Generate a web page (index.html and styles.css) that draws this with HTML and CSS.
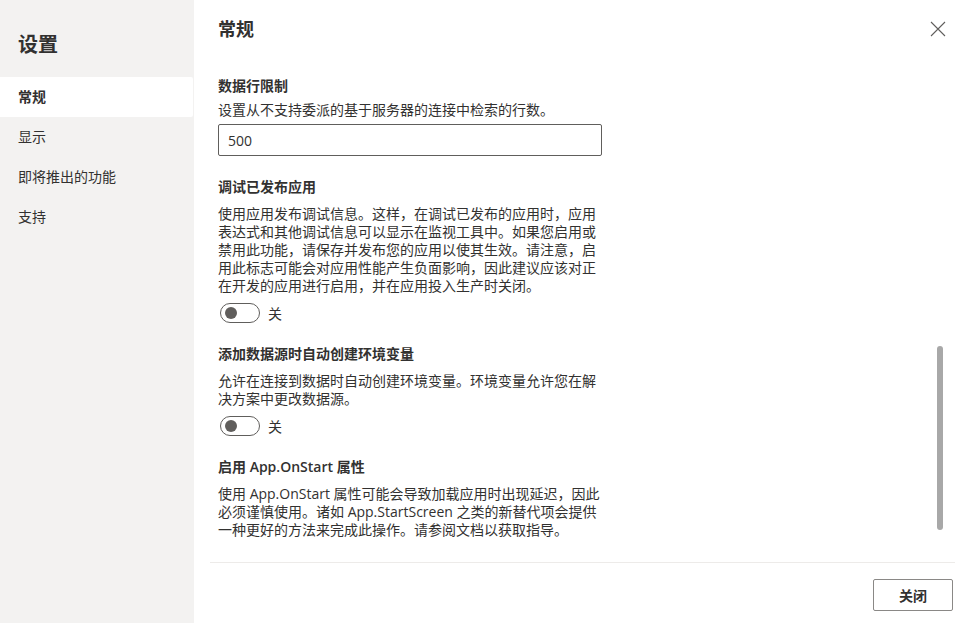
FILE: index.html
```html
<!DOCTYPE html>
<html lang="zh-CN">
<head>
<meta charset="utf-8">
<title>设置</title>
<link rel="stylesheet" href="styles.css">
</head>
<body>
<div class="dialog">
  <aside class="sidebar">
    <h1 class="sidebar-title">设置</h1>
    <nav class="nav">
      <a class="nav-item is-active">常规</a>
      <a class="nav-item">显示</a>
      <a class="nav-item">即将推出的功能</a>
      <a class="nav-item">支持</a>
    </nav>
  </aside>

  <main class="panel">
    <div class="panel-body">
      <header class="panel-header">
        <h2 class="panel-title">常规</h2>
        <button class="close-btn" aria-label="关闭">
          <svg width="16" height="16" viewBox="0 0 16 16" aria-hidden="true">
            <path d="M1 1 L15 15 M15 1 L1 15" stroke="#605e5c" stroke-width="1.1" fill="none"/>
          </svg>
        </button>
      </header>

      <section class="setting setting-first">
        <div class="setting-label">数据行限制</div>
        <p class="setting-desc tight">设置从不支持委派的基于服务器的连接中检索的行数。</p>
        <input class="text-input" type="text" value="500">
      </section>

      <section class="setting">
        <div class="setting-label">调试已发布应用</div>
        <p class="setting-desc">使用应用发布调试信息。这样，在调试已发布的应用时，应用表达式和其他调试信息可以显示在监视工具中。如果您启用或禁用此功能，请保存并发布您的应用以使其生效。请注意，启用此标志可能会对应用性能产生负面影响，因此建议应该对正在开发的应用进行启用，并在应用投入生产时关闭。</p>
        <div class="toggle-row">
          <span class="toggle"><span class="toggle-knob"></span></span>
          <span class="toggle-text">关</span>
        </div>
      </section>

      <section class="setting">
        <div class="setting-label">添加数据源时自动创建环境变量</div>
        <p class="setting-desc">允许在连接到数据时自动创建环境变量。环境变量允许您在解决方案中更改数据源。</p>
        <div class="toggle-row">
          <span class="toggle"><span class="toggle-knob"></span></span>
          <span class="toggle-text">关</span>
        </div>
      </section>

      <section class="setting">
        <div class="setting-label">启用 App.OnStart 属性</div>
        <p class="setting-desc">使用 App.OnStart 属性可能会导致加载应用时出现延迟，因此必须谨慎使用。诸如 App.StartScreen 之类的新替代项会提供一种更好的方法来完成此操作。请参阅文档以获取指导。</p>
      </section>

      <div class="scroll-thumb"></div>
    </div>

    <footer class="panel-footer">
      <button class="btn">关闭</button>
    </footer>
  </main>
</div>
</body>
</html>
```

FILE: styles.css
```css
* {
  box-sizing: border-box;
}

html, body {
  margin: 0;
  padding: 0;
  height: 100%;
}

body {
  font-family: "Segoe UI", "Open Sans", "Noto Sans CJK SC", sans-serif;
  font-size: 14px;
  color: #323130;
  background: #ffffff;
}

.dialog {
  display: flex;
  height: 623px;
  width: 959px;
}

/* left navigation */
.sidebar {
  width: 194px;
  flex: none;
  background: #f3f2f1;
  padding-top: 31px;
}

.sidebar-title {
  margin: 0 0 18px 18px;
  font-size: 20px;
  line-height: 28px;
  font-weight: 600;
}

.nav {
  display: flex;
  flex-direction: column;
}

.nav-item {
  display: block;
  height: 40px;
  line-height: 40px;
  padding-left: 18px;
  margin-right: 1px;
  color: #323130;
  cursor: pointer;
}

.nav-item.is-active {
  background: #ffffff;
  font-weight: 600;
  border-radius: 0 2px 2px 0;
}

/* right panel */
.panel {
  flex: 1;
  display: flex;
  flex-direction: column;
  min-width: 0;
}

.panel-body {
  position: relative;
  flex: 1;
  padding: 17px 0 0 24px;
}

.panel-header {
  display: flex;
  align-items: center;
  justify-content: space-between;
  height: 24px;
}

.panel-title {
  margin: 0;
  font-size: 18px;
  line-height: 24px;
  font-weight: 600;
}

.close-btn {
  width: 32px;
  height: 32px;
  margin-right: 5px;
  border: none;
  background: transparent;
  padding: 0;
  display: flex;
  align-items: center;
  justify-content: center;
  cursor: pointer;
}

.setting {
  width: 384px;
  margin-top: 21px;
}

.setting-first {
  margin-top: 35px;
}

.setting-label {
  font-weight: 600;
  line-height: 20px;
}

.setting-desc {
  margin: 8px 0 0;
  line-height: 18px;
}

.setting-desc.tight {
  margin-top: 5px;
}

.text-input {
  display: block;
  width: 384px;
  height: 32px;
  margin-top: 5px;
  padding: 0 9px;
  border: 1px solid #605e5c;
  border-radius: 2px;
  font: inherit;
  color: #323130;
  background: #ffffff;
}

.toggle-row {
  display: flex;
  align-items: center;
  margin-top: 8px;
  padding-left: 2px;
  height: 20px;
}

.toggle {
  position: relative;
  width: 40px;
  height: 20px;
  border: 1px solid #605e5c;
  border-radius: 10px;
}

.toggle-knob {
  position: absolute;
  left: 4px;
  top: 3px;
  width: 12px;
  height: 12px;
  border-radius: 50%;
  background: #605e5c;
}

.toggle-text {
  margin-left: 8px;
}

/* overlay scrollbar */
.scroll-thumb {
  position: absolute;
  left: 743px;
  top: 346px;
  width: 6px;
  height: 184px;
  border-radius: 3px;
  background: #a8a8a8;
}

.panel-footer {
  display: flex;
  justify-content: flex-end;
  margin: 0 4px 0 16px;
  padding: 16px 2px 12px 0;
  border-top: 1px solid #edebe9;
}

.btn {
  width: 80px;
  height: 32px;
  border: 1px solid #8a8886;
  border-radius: 2px;
  background: #ffffff;
  font: inherit;
  font-weight: 600;
  color: #323130;
  cursor: pointer;
}
```
